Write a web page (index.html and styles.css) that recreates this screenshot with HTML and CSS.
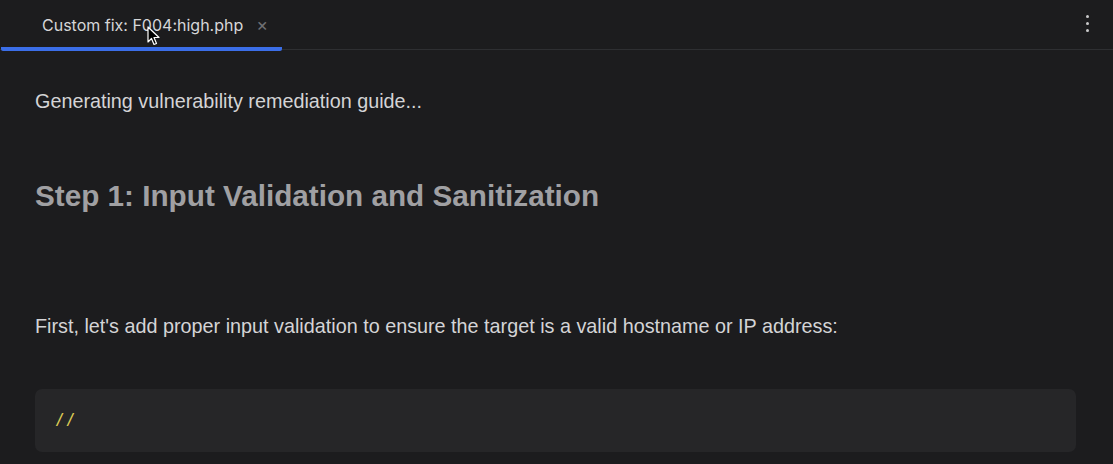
FILE: index.html
```html
<!DOCTYPE html>
<html>

<head>
  <title>Custom fix</title>
  <link rel="stylesheet" href="styles.css">
</head>

<body>
  <div class="tabbar">
    <div class="tab">
      <span class="tab-title">Custom fix: F004:high.php</span>
      <span class="tab-close">&times;</span>
      <svg class="cursor" width="14" height="20" viewBox="0 0 14 20">
        <path d="M1 1 L1 16 L4.5 12.5 L7 18.5 L9.5 17.5 L7 11.5 L12 11.5 Z" fill="#000" stroke="#fff" stroke-width="1.2" stroke-linejoin="round"/>
      </svg>
    </div>
    <div class="menu">
      <span></span>
      <span></span>
      <span></span>
    </div>
  </div>

  <div class="content">
    <p class="status">Generating vulnerability remediation guide...</p>
    <h2>Step 1: Input Validation and Sanitization</h2>
    <p class="text">First, let's add proper input validation to ensure the target is a valid hostname or IP address:</p>
    <pre class="code"><code>//</code></pre>
  </div>
</body>

</html>
```

FILE: styles.css
```css
body {
  margin: 0;
  background: #1c1c1e;
  font-family: "Liberation Sans", Arial, sans-serif;
  color: #d4d4d6;
  height: 464px;
  overflow: hidden;
}

.tabbar {
  height: 49px;
  border-bottom: 1px solid #2e2f32;
  display: flex;
  justify-content: space-between;
  align-items: stretch;
}

.tab {
  position: relative;
  width: 281px;
  margin-left: 1px;
  display: flex;
  align-items: center;
  padding-left: 41px;
  box-sizing: border-box;
  gap: 13px;
  border-bottom: 4px solid #3b6ee8;
  border-radius: 0 0 2px 2px;
  margin-bottom: -2px;
  padding-top: 2px;
}

.tab-title {
  font-family: Inter, sans-serif;
  font-size: 16px;
  color: #d6d6d8;
}

.tab-close {
  font-family: Inter, sans-serif;
  font-size: 18px;
  color: #6e6f73;
}

.cursor {
  position: absolute;
  left: 146px;
  top: 26px;
}

.menu {
  width: 52px;
  display: flex;
  flex-direction: column;
  align-items: center;
  justify-content: center;
  gap: 4px;
  padding-bottom: 2px;
}

.menu span {
  width: 3px;
  height: 3px;
  border-radius: 50%;
  background: #c8c8ca;
}

.content {
  padding: 0 37px 0 35px;
}

.status {
  margin: 39px 0 0;
  font-size: 19.8px;
  line-height: 24px;
}

h2 {
  margin: 65px 0 0;
  font-size: 29.7px;
  line-height: 36px;
  color: #a0a0a3;
}

.text {
  margin: 100px 0 0;
  font-size: 19.8px;
  line-height: 24px;
}

.code {
  margin: 51px 0 0;
  background: #262628;
  border-radius: 7px;
  padding: 20px 20px;
  font-family: "Liberation Mono", monospace;
  font-size: 16px;
  line-height: 22px;
  letter-spacing: 1px;
  color: #dccb55;
}
```
